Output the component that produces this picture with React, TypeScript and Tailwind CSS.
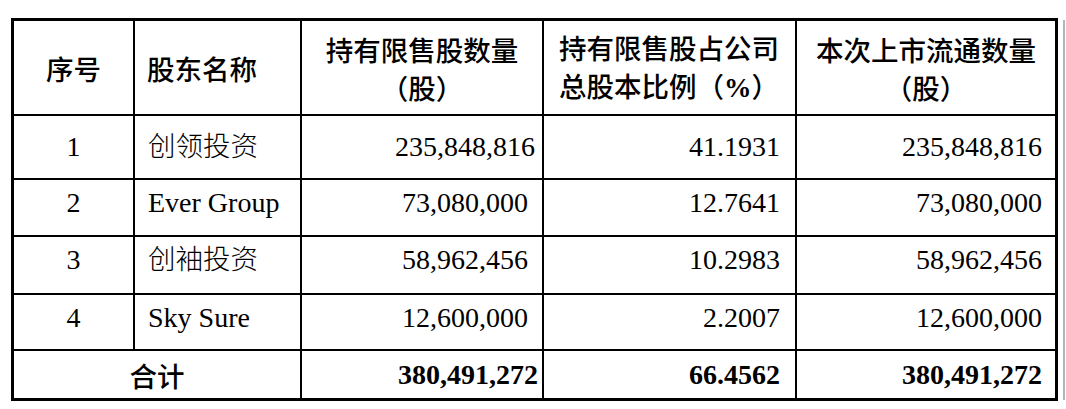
import React from "react";

type Row = { no: string; name: string; a: string; b: string; c: string; padA: string; shift: string; cjk: boolean };

const rows: Row[] = [
  { no: "1", name: "创领投资", a: "235,848,816", b: "41.1931", c: "235,848,816", padA: "pr-[7px]", shift: "pb-0", cjk: true },
  { no: "2", name: "Ever Group", a: "73,080,000", b: "12.7641", c: "73,080,000", padA: "pr-[14px]", shift: "pb-[10px]", cjk: false },
  { no: "3", name: "创袖投资", a: "58,962,456", b: "10.2983", c: "58,962,456", padA: "pr-[14px]", shift: "pb-[10px]", cjk: true },
  { no: "4", name: "Sky Sure", a: "12,600,000", b: "2.2007", c: "12,600,000", padA: "pr-[14px]", shift: "pb-[8px]", cjk: false },
];

const serifCls = "font-['Liberation_Serif','Noto_Sans_CJK_SC',serif]";
const headCls = "font-['Noto_Sans_CJK_SC','Liberation_Sans',sans-serif] text-[27.5px] font-medium leading-[38px]";

export default function App() {
  return (
    <div className="bg-white w-[1066px] h-[409px] overflow-hidden">
      <div className="flex pt-[18px] pl-[11px]">
        <div className="border-[3px] border-black bg-black grid grid-cols-[119px_165px_240px_251px_258px] grid-rows-[93px_62px_55px_56px_54px_47px] gap-[2px] text-black">
          <div className={`bg-white flex items-center justify-center ${headCls}`}>序号</div>
          <div className={`bg-white flex items-center justify-start pl-[12px] ${headCls}`}>股东名称</div>
          <div className={`bg-white flex flex-col items-center justify-center ${headCls}`}>
            <span>持有限售股数量</span>
            <span>（股）</span>
          </div>
          <div className={`bg-white flex flex-col items-start justify-center pl-[15px] ${headCls}`}>
            <span>持有限售股占公司</span>
            <span>
              总股本比例（<span className="font-['Liberation_Serif',serif] font-bold">%</span>）
            </span>
          </div>
          <div className={`bg-white flex flex-col items-center justify-center ${headCls}`}>
            <span>本次上市流通数量</span>
            <span>（股）</span>
          </div>

          {rows.map((r) => (
            <React.Fragment key={r.no}>
              <div className={`bg-white flex items-center justify-center text-[28px] leading-[32px] ${serifCls} ${r.shift}`}>{r.no}</div>
              <div
                className={`bg-white flex items-center justify-start pl-[13px] leading-[32px] ${serifCls} ${r.cjk ? "text-[27.5px] font-light" : "text-[28px]"} ${r.shift}`}
              >
                {r.name}
              </div>
              <div className={`bg-white flex items-center justify-end text-[28px] leading-[32px] ${serifCls} ${r.padA} ${r.shift}`}>{r.a}</div>
              <div className={`bg-white flex items-center justify-end pr-[15px] text-[28px] leading-[32px] ${serifCls} ${r.shift}`}>{r.b}</div>
              <div className={`bg-white flex items-center justify-end pr-[13px] text-[28px] leading-[32px] ${serifCls} ${r.shift}`}>{r.c}</div>
            </React.Fragment>
          ))}

          <div className={`bg-white col-span-2 flex items-center justify-center ${headCls}`}>合计</div>
          <div className={`bg-white flex items-center justify-end pr-[4px] text-[28px] font-bold leading-[32px] ${serifCls}`}>380,491,272</div>
          <div className={`bg-white flex items-center justify-end pr-[15px] text-[28px] font-bold leading-[32px] ${serifCls}`}>66.4562</div>
          <div className={`bg-white flex items-center justify-end pr-[13px] text-[28px] font-bold leading-[32px] ${serifCls}`}>380,491,272</div>
        </div>
        <div className="ml-[5px] mt-[2px] w-[2px] h-[380px] bg-[#b5b5b5]" />
      </div>
    </div>
  );
}
